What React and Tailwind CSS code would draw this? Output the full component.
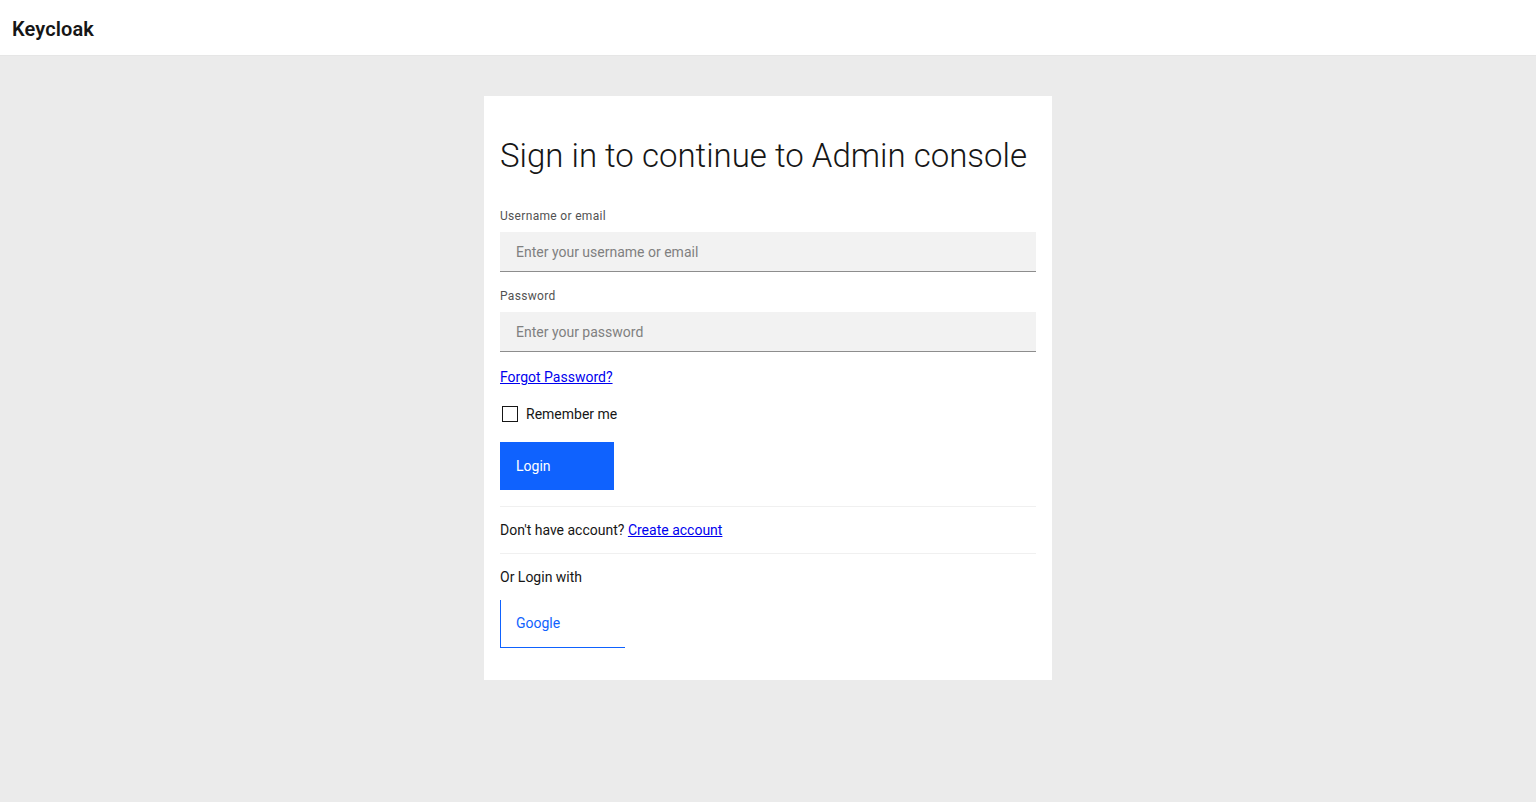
import React from 'react';

export default function App() {
  const font = { fontFamily: 'Roboto, "Noto Sans", sans-serif' };

  return (
    <div className="min-h-screen bg-[#ebebeb] text-[#161616]" style={font}>
      {/* Header */}
      <header className="h-[56px] bg-white border-b border-[#e6e6e6] flex items-center px-3 pt-[3px]">
        <span className="text-[20px] font-semibold tracking-[0.1px] text-[#161616]">Keycloak</span>
      </header>

      <div className="flex justify-center pt-[40px]">
        <div className="w-[568px] bg-white px-4 pt-[38px] pb-[32px]">
          <h1 className="text-[33px] font-light leading-[44px] mb-[30px] whitespace-nowrap">Sign in to continue to Admin console</h1>

          <label className="block text-[12px] text-[#525252] tracking-[0.32px] leading-4 mb-2">Username or email</label>
          <input
            type="text"
            placeholder="Enter your username or email"
            className="w-full h-10 px-4 bg-[#f2f2f2] border-b border-[#8d8d8d] text-[14px] placeholder-[#808080] outline-none"
          />

          <label className="block text-[12px] text-[#525252] tracking-[0.32px] leading-4 mt-4 mb-2">Password</label>
          <input
            type="password"
            placeholder="Enter your password"
            className="w-full h-10 px-4 bg-[#f2f2f2] border-b border-[#8d8d8d] text-[14px] placeholder-[#808080] outline-none"
          />

          <div className="mt-[16px] leading-[18px]">
            <a href="#" className="text-[14px] text-[#0000ee] underline">Forgot Password?</a>
          </div>

          <label className="flex items-center gap-2 mt-[18px] h-5">
            <span className="w-4 h-4 ml-[2px] border border-[#161616] bg-white"></span>
            <span className="text-[14px]">Remember me</span>
          </label>

          <button className="mt-[18px] h-12 w-[114px] bg-[#0f62fe] text-white text-[14px] text-left px-4">Login</button>

          <div className="mt-4 border-t border-[#f0f0f0] py-[14px] text-[14px] leading-[18px]">
            Don't have account? <a href="#" className="text-[#0000ee] underline">Create account</a>
          </div>

          <div className="border-t border-[#f0f0f0] pt-[14px] text-[14px] leading-[18px]">Or Login with</div>

          <button className="mt-[14px] h-12 w-[125px] border-l border-b border-[#0f62fe] text-[#0f62fe] text-[14px] text-left pl-[15px] pr-4">Google</button>
        </div>
      </div>
    </div>
  );
}
